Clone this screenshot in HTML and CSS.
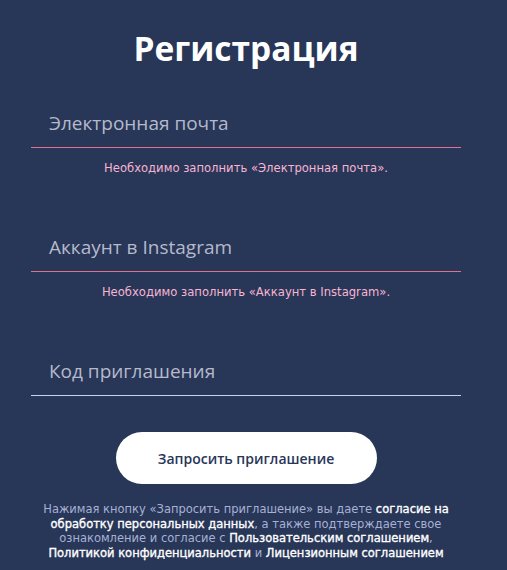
FILE: index.html
```html
<!DOCTYPE html>
<html lang="ru">
<head>
<meta charset="utf-8">
<title>Регистрация</title>
<link rel="stylesheet" href="styles.css">
</head>
<body>
<div class="wrap">
  <h1 class="title">Регистрация</h1>
  <div class="field has-error">
    <div class="label">Электронная почта</div>
    <div class="error">Необходимо заполнить «Электронная почта».</div>
  </div>
  <div class="field has-error">
    <div class="label">Аккаунт в Instagram</div>
    <div class="error">Необходимо заполнить «Аккаунт в Instagram».</div>
  </div>
  <div class="field">
    <div class="label">Код приглашения</div>
  </div>
  <div class="actions">
    <button class="btn">Запросить приглашение</button>
  </div>
  <p class="note">Нажимая кнопку «Запросить приглашение» вы даете <b>согласие на</b><br><b>обработку персональных данных</b>, а также подтверждаете свое<br>ознакомление и согласие с <b>Пользовательским соглашением</b>,<br><b>Политикой конфиденциальности</b> и <b>Лицензионным соглашением</b></p>
</div>
</body>
</html>
```
FILE: styles.css
```css
html, body {
  margin: 0;
  padding: 0;
  background: #283658;
}
body {
  font-family: "Open Sans", "DejaVu Sans", sans-serif;
  height: 570px;
  overflow: hidden;
}
.wrap {
  width: 430px;
  margin-left: 31px;
  padding-top: 27px;
}
.title {
  margin: 0;
  font-size: 33.5px;
  line-height: 43px;
  font-weight: 700;
  color: #ffffff;
  text-align: center;
}
.field {
  margin-top: 41px;
}
.field + .field {
  margin-top: 59px;
}
.label {
  padding: 0 0 12px 18px;
  font-size: 19px;
  line-height: 24px;
  color: #b5bacb;
  border-bottom: 1px solid #c9d0ea;
}
.has-error .label {
  border-bottom-color: #e0718f;
}
.error {
  margin-top: 12px;
  font-family: "DejaVu Sans", sans-serif;
  font-size: 11.6px;
  line-height: 16px;
  color: #f6b5d0;
  text-align: center;
}
.actions {
  display: flex;
  justify-content: center;
  margin-top: 36px;
}
.btn {
  width: 261px;
  height: 52px;
  border: 0;
  border-radius: 26px;
  background: #ffffff;
  color: #283658;
  font-family: "Open Sans", sans-serif;
  font-size: 14px;
  font-weight: 600;
  padding: 0;
}
.note {
  margin: 18px 0 0;
  font-family: "DejaVu Sans", sans-serif;
  font-size: 11.5px;
  line-height: 14.5px;
  color: #a7b1d4;
  text-align: center;
  white-space: nowrap;
}
.note b {
  color: #ffffff;
  font-weight: 400;
  -webkit-text-stroke: 0.35px #ffffff;
}
```
